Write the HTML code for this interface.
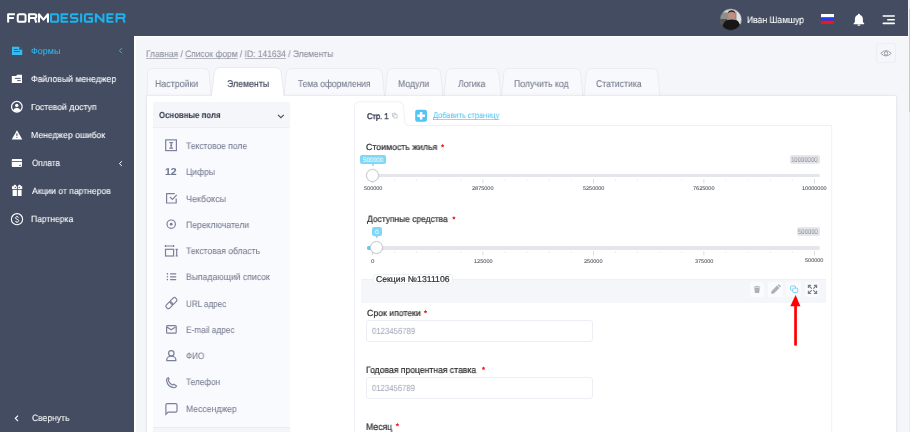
<!DOCTYPE html>
<html><head><meta charset="utf-8">
<style>
*{margin:0;padding:0;box-sizing:border-box}
html,body{width:910px;height:432px;overflow:hidden;background:#f5f6fa;font-family:"Liberation Sans",sans-serif}
.a{position:absolute}
.t{position:absolute;white-space:nowrap;line-height:1;transform-origin:0 0;will-change:transform;-webkit-text-stroke:.08px currentColor;text-rendering:geometricPrecision}
svg{position:absolute;left:0;top:0;overflow:visible}
u{text-decoration-color:#b3b7c1;text-decoration-skip-ink:none}
</style></head><body>
<div class="a" style="left:0;top:0;width:908px;height:36px;background:#434c60"></div>
<div class="a" style="left:0;top:36px;width:134px;height:396px;background:#434c60"></div>
<div class="a" style="left:134px;top:36px;width:774px;height:396px;background:#f5f6fa;border-left:2px solid #fff;border-top:1.5px solid #fff"></div>
<div class="a" style="left:908px;top:0;width:1px;height:432px;background:#f7f7f9"></div><div class="a" style="left:909px;top:0;width:1px;height:432px;background:#ebebed"></div>
<div class="a" style="left:909px;top:9px;width:1px;height:103px;background:#c9cacf"></div>

<!-- logo -->
<svg width="910" height="432"><path d="M14.9 14.25H8.15V22.6M8.15 18H13.9 M19.35 14.25H23.95Q25.55 14.25 25.55 15.85V20.15Q25.55 21.75 23.95 21.75H19.35Q17.75 21.75 17.75 20.15V15.85Q17.75 14.25 19.35 14.25Z M29.05 22.6V14.25H34.6Q36.25 14.25 36.25 15.9V16.35Q36.25 18 34.6 18H29.05M34.8 18L36.35 22.6 M38.95 22.6V14.25L43.45 19.6L47.95 14.25V22.6" fill="none" stroke="#fff" stroke-width="2.05" stroke-linejoin="round"/><path d="M51.05 14.25H56.55Q58.15 14.25 58.15 15.85V20.15Q58.15 21.75 56.55 21.75H51.05Z M68.2 14.25H61.55V21.75H68.2M61.55 18H67.4 M78.3 14.25H72.3Q70.85 14.25 70.85 15.7V16.55Q70.85 18 72.3 18H76Q77.45 18 77.45 19.45V20.3Q77.45 21.75 76 21.75H70 M81.15 13.4V22.6 M92.8 14.25H86.45Q84.85 14.25 84.85 15.85V20.15Q84.85 21.75 86.45 21.75H91.95V18H88.5 M95.85 22.6V14.25L103.45 21.75V13.4 M113.5 14.25H107.35V21.75H113.5M107.35 18H112.7 M116.55 22.6V14.25H122.9Q124.55 14.25 124.55 15.9V16.35Q124.55 18 122.9 18H116.55M123.1 18L124.65 22.6" fill="none" stroke="#1ab3ee" stroke-width="2.05" stroke-linejoin="round"/></svg>

<!-- header right icons -->
<svg width="910" height="432">
<defs><clipPath id="av"><circle cx="730.8" cy="19.6" r="10.8"/></clipPath></defs>
<filter id="avb" x="-10%" y="-10%" width="120%" height="120%"><feGaussianBlur stdDeviation=".55"/></filter>
<g clip-path="url(#av)"><g filter="url(#avb)">
<rect x="718" y="7" width="26" height="26" fill="#8e8e8c"/>
<rect x="718" y="7" width="26" height="5.5" fill="#cfcfcd"/>
<rect x="736.5" y="10" width="6" height="14" fill="#e2e2e0"/>
<rect x="718" y="19" width="9" height="14" fill="#55524f"/>
<ellipse cx="731.6" cy="15.6" rx="3.5" ry="4.2" fill="#bf8e80"/>
<path d="M727.9 13.2Q728.2 10.4 731.6 10.3Q735.1 10.4 735.3 13.2Q733.6 11.9 731.6 12Q729.6 11.9 727.9 13.2z" fill="#3a2f2a"/>
<path d="M721.5 33Q722 22.5 726.5 20.2L731.6 19.6L736.8 20.2Q740.5 22 741.5 33z" fill="#161616"/>
</g></g>
<circle cx="730.8" cy="19.6" r="10.8" fill="none" stroke="#5a5f70" stroke-width=".5"/>
<rect x="821" y="14" width="13" height="3.4" fill="#ffffff"/>
<rect x="821" y="17.4" width="13" height="3.3" fill="#1d3df0"/>
<rect x="821" y="20.7" width="13" height="3.3" fill="#ee1424"/>
<path d="M858.9 13.8c.7 0 1.1.5 1.1 1.1 1.9.5 2.9 2.1 2.9 4.1v2.9l1.3 1.7v.7h-10.6v-.7l1.3-1.7V19c0-2 1-3.6 2.9-4.1 0-.6.4-1.1 1.1-1.1z" fill="#fff"/>
<path d="M857.3 24.4h3.2c0 .9-.7 1.4-1.6 1.4s-1.6-.5-1.6-1.4z" fill="#fff"/>
<rect x="882.5" y="15.2" width="12.5" height="1.6" rx=".8" fill="#fff"/>
<rect x="887" y="19" width="8" height="1.6" rx=".8" fill="#fff"/>
<rect x="882.5" y="22.6" width="12.5" height="1.6" rx=".8" fill="#fff"/>
</svg>

<!-- sidebar icons -->
<svg width="910" height="432">
<path d="M12 46.8h7.6l2.6 2.6v5.5H12z" fill="#35bdf3"/>
<path d="M19.6 46.8v2.6h2.6" fill="#434c60" stroke="#434c60" stroke-width=".6"/>
<rect x="13.8" y="49.1" width="4" height=".9" fill="#434c60"/>
<rect x="13.8" y="51.2" width="6" height=".9" fill="#434c60"/>
<path d="M11.8 76h4.5l.6-1.2H22V83H11.8z" fill="#fff"/>
<rect x="14.9" y="77.9" width="5.8" height=".9" fill="#434c60"/>
<rect x="17.2" y="80.2" width="3.5" height=".9" fill="#434c60"/>
<circle cx="16.85" cy="106.75" r="5.3" fill="none" stroke="#fff" stroke-width="1.2"/>
<circle cx="16.8" cy="105.4" r="1.7" fill="#fff"/>
<path d="M13.2 110.3 Q14 107.8 16.85 107.8 Q19.7 107.8 20.5 110.3 Q19 111.8 16.85 111.8 Q14.7 111.8 13.2 110.3z" fill="#fff"/>
<path d="M17 130.2 L22.3 139.6 H11.7z" fill="#fff"/>
<rect x="16.35" y="133.4" width="1.1" height="2.4" fill="#434c60"/>
<rect x="16.35" y="136.8" width="1.1" height="1" fill="#434c60"/>
<rect x="11.8" y="159" width="10.2" height="7.9" rx=".8" fill="#fff"/>
<rect x="11.8" y="161.2" width="10.2" height=".8" fill="#434c60"/>
<rect x="19" y="164.9" width="2" height=".8" fill="#434c60"/>
<rect x="12" y="186.2" width="10.2" height="2.9" fill="#fff"/>
<rect x="12.6" y="189.9" width="9" height="6.1" fill="#fff"/>
<rect x="16.9" y="186" width=".9" height="10" fill="#434c60"/>
<circle cx="14.9" cy="186" r="1.3" fill="#fff"/><circle cx="19.5" cy="186" r="1.3" fill="#fff"/>
<circle cx="15.3" cy="187.4" r=".6" fill="#434c60"/><circle cx="19.25" cy="187.4" r=".6" fill="#434c60"/>
<circle cx="17" cy="219.2" r="5.6" fill="none" stroke="#fff" stroke-width="1.1"/>
<path d="M18.6 217.6c-.2-.6-.8-.9-1.6-.9-.9 0-1.6.5-1.6 1.2 0 1.6 3.4 1 3.4 2.8 0 .8-.8 1.3-1.8 1.3-.9 0-1.6-.4-1.8-1.1M17 215.9v.8M17 222v.8" fill="none" stroke="#fff" stroke-width=".9"/>
<path d="M121.9 48.2 L119.4 50.7 L121.9 53.2" fill="none" stroke="#2db8f0" stroke-width="1"/>
<path d="M121.9 161.3 L119.4 163.6 L121.9 166" fill="none" stroke="#fff" stroke-width="1"/>
<path d="M18 415.6 L15.3 418.3 L18 421" fill="none" stroke="#fff" stroke-width="1.1"/>
</svg>

<!-- eye button -->
<div class="a" style="left:876px;top:43px;width:20px;height:20px;border:1px solid #eceef2;border-radius:3px"></div>
<svg width="910" height="432">
<path d="M880.8 53.3 Q886 48 891.2 53.3 Q886 58.6 880.8 53.3z" fill="none" stroke="#9aa0ad" stroke-width="1"/>
<circle cx="886" cy="53.3" r="1.7" fill="none" stroke="#9aa0ad" stroke-width="1"/>
</svg>

<!-- tabs -->
<svg width="910" height="432"><path d="M147.00 96.50 L147.50 74.00 Q147.90 68.50 153.00 68.50 L203.80 68.50 Q208.90 68.50 209.30 74.00 L211.30 96.50 Z" fill="#f8f9fc" stroke="#e6e8ee" stroke-width="0.8"/><path d="M284.00 96.50 L286.20 74.00 Q286.60 68.50 291.70 68.50 L376.80 68.50 Q381.90 68.50 382.30 74.00 L384.50 96.50 Z" fill="#f8f9fc" stroke="#e6e8ee" stroke-width="0.8"/><path d="M385.00 96.50 L387.20 74.00 Q387.60 68.50 392.70 68.50 L435.30 68.50 Q440.40 68.50 440.80 74.00 L443.00 96.50 Z" fill="#f8f9fc" stroke="#e6e8ee" stroke-width="0.8"/><path d="M444.00 96.50 L446.20 74.00 Q446.60 68.50 451.70 68.50 L493.30 68.50 Q498.40 68.50 498.80 74.00 L501.00 96.50 Z" fill="#f8f9fc" stroke="#e6e8ee" stroke-width="0.8"/><path d="M501.50 96.50 L503.70 74.00 Q504.10 68.50 509.20 68.50 L575.30 68.50 Q580.40 68.50 580.80 74.00 L583.00 96.50 Z" fill="#f8f9fc" stroke="#e6e8ee" stroke-width="0.8"/><path d="M584.00 96.50 L586.20 74.00 Q586.60 68.50 591.70 68.50 L652.30 68.50 Q657.40 68.50 657.80 74.00 L660.00 96.50 Z" fill="#f8f9fc" stroke="#e6e8ee" stroke-width="0.8"/></svg>
<div class="a" style="left:147px;top:96px;width:749px;height:340px;background:#fff;box-shadow:0 0 1.2px rgba(60,70,100,.2),0 0 4px rgba(60,70,110,.08)"></div>
<svg width="910" height="432"><path d="M211.50 96.20 L214.20 73.50 Q214.60 67.50 220.20 67.50 L275.30 67.50 Q280.90 67.50 281.30 73.50 L284.00 96.20" fill="#ffffff" stroke="#e4e6ec" stroke-width="0.8"/><rect x="212" y="95" width="71.5" height="3" fill="#fff"/></svg>

<!-- left fields panel -->
<div class="a" style="left:153px;top:101.5px;width:137px;height:25.5px;background:#f5f6fa"></div>
<div class="a" style="left:153px;top:127px;width:137px;height:300px;background:#f9fafd;border-top:1px solid #edeff4"></div>
<div class="a" style="left:153px;top:427px;width:137px;height:6px;background:#f4f5f9;border-top:1px solid #eaecf1"></div>
<svg width="910" height="432">
<path d="M278 114.8l2.9 2.9 2.9-2.9" stroke="#4a5166" stroke-width="1.2" fill="none"/>
<g fill="none" stroke="#7a819a" stroke-width="1.2">
<rect x="165.7" y="139.9" width="10.7" height="10.7"/>
<path d="M169.3 142.7h3.8M169.3 148.1h3.8M171.2 142.7v5.4M170.2 145.4h2"/>
<path d="M176.2 198.6v4.4H166.6V193.6h8.2"/>
<path d="M169.9 196.9l2.5 2.5 4.4-4.6"/>
<circle cx="171.2" cy="224.2" r="4.2"/>
<path d="M165.4 246h8.2M165.4 244.9v2.2M173.6 244.9v2.2"/>
<rect x="165.5" y="249.3" width="8.1" height="6.7"/>
<path d="M176.7 249.3v6.7M175.5 249.3h2.4M175.5 256h2.4"/>
<path d="M170.1 273.9h6.1M170.1 276.8h6.1M170.1 279.6h6.1"/>
<rect x="166.6" y="325.6" width="9.6" height="7.6" rx="1"/>
<path d="M166.8 327.1l4.4 2.7 4.4-2.7"/>
<circle cx="171.3" cy="353.3" r="2.7"/>
<path d="M166.8 360.6v-1c0-1.9 2-3.4 4.5-3.4s4.5 1.5 4.5 3.4v1z"/>
<path d="M168.4 377.7c-1.2.4-2 1.4-1.8 2.9.6 3.6 3.5 6.5 7.1 7.1 1.5.2 2.5-.6 2.9-1.8l-2.6-1.7c-.5.6-1.1.9-1.8.6-1.6-.8-2.9-2.1-3.7-3.7-.3-.7 0-1.3.6-1.8z"/>
<path d="M165.9 414.3V405c0-.8.6-1.4 1.4-1.4h8.3c.8 0 1.4.6 1.4 1.4v5.7c0 .8-.6 1.4-1.4 1.4h-7.4z"/>
</g>
<g fill="#7a819a">
<circle cx="171.2" cy="224.2" r="1.4"/>
<circle cx="167.4" cy="273.9" r=".8"/><circle cx="167.4" cy="276.8" r=".8"/><circle cx="167.4" cy="279.6" r=".8"/>
</g>

</svg>
<svg width="910" height="432"><g fill="none" stroke="#7a819a" stroke-width="1.2">
<rect x="-3.6" y="-2.3" width="7.2" height="4.6" rx="1.8" transform="translate(173.5 301.0) rotate(-45)"/>
<rect x="-3.6" y="-2.3" width="7.2" height="4.6" rx="1.8" transform="translate(169.3 305.2) rotate(-45)"/>
</g></svg>

<!-- form area -->
<svg width="910" height="432"><path d="M354.5 440V107.5Q354.5 101.8 360.2 101.8H397.8Q403.3 101.8 403.7 107L404.6 121.6Q404.9 125.5 409 125.5H831.7V440" fill="none" stroke="#eef0f5" stroke-width="1"/></svg>
<svg width="910" height="432">
<rect x="392.5" y="113.3" width="3.4" height="3.4" rx=".6" fill="none" stroke="#b8bcc6" stroke-width=".8"/>
<rect x="393.8" y="114.6" width="3.4" height="3.4" rx=".6" fill="#fff" stroke="#b8bcc6" stroke-width=".8"/>
<rect x="415.2" y="109.8" width="11.8" height="12" rx="2" fill="#52c5f6"/>
<path d="M421.1 112v7.6M417.3 115.8h7.6" stroke="#fff" stroke-width="2.5"/>
</svg>

<!-- slider 1 -->
<div class="a" style="left:360px;top:154.5px;width:25.8px;height:9.6px;border-radius:2px;background:#80d8f8"></div>
<svg width="910" height="432"><path d="M371.6 164.2H374.4L373 166.6z" fill="#80d8f8"/></svg>
<div class="a" style="left:789.5px;top:155.2px;width:30.1px;height:8.6px;border-radius:2px;background:#e5e7ec"></div>
<div class="a" style="left:366px;top:174.1px;width:453.6px;height:3.4px;border-radius:1.7px;background:#e4e6eb"></div>
<svg width="910" height="432"><rect x="372.00" y="179.2" width="0.8" height="4" fill="#d3d6dc"/><rect x="394.10" y="179.4" width="0.8" height="1.5" fill="#e2e4e8"/><rect x="416.20" y="179.4" width="0.8" height="1.5" fill="#e2e4e8"/><rect x="438.30" y="179.4" width="0.8" height="1.5" fill="#e2e4e8"/><rect x="460.40" y="179.4" width="0.8" height="1.5" fill="#e2e4e8"/><rect x="482.50" y="179.2" width="0.8" height="4" fill="#d3d6dc"/><rect x="504.60" y="179.4" width="0.8" height="1.5" fill="#e2e4e8"/><rect x="526.70" y="179.4" width="0.8" height="1.5" fill="#e2e4e8"/><rect x="548.80" y="179.4" width="0.8" height="1.5" fill="#e2e4e8"/><rect x="570.90" y="179.4" width="0.8" height="1.5" fill="#e2e4e8"/><rect x="593.00" y="179.2" width="0.8" height="4" fill="#d3d6dc"/><rect x="615.10" y="179.4" width="0.8" height="1.5" fill="#e2e4e8"/><rect x="637.20" y="179.4" width="0.8" height="1.5" fill="#e2e4e8"/><rect x="659.30" y="179.4" width="0.8" height="1.5" fill="#e2e4e8"/><rect x="681.40" y="179.4" width="0.8" height="1.5" fill="#e2e4e8"/><rect x="703.50" y="179.2" width="0.8" height="4" fill="#d3d6dc"/><rect x="725.60" y="179.4" width="0.8" height="1.5" fill="#e2e4e8"/><rect x="747.70" y="179.4" width="0.8" height="1.5" fill="#e2e4e8"/><rect x="769.80" y="179.4" width="0.8" height="1.5" fill="#e2e4e8"/><rect x="791.90" y="179.4" width="0.8" height="1.5" fill="#e2e4e8"/><rect x="814.00" y="179.2" width="0.8" height="4" fill="#d3d6dc"/></svg>
<div class="a" style="left:365.7px;top:168.8px;width:13.2px;height:13.2px;border-radius:50%;background:#fff;border:1.2px solid #c8cbd2;box-shadow:0 0 1.5px rgba(0,0,0,.12)"></div>

<!-- slider 2 -->
<div class="a" style="left:372px;top:227px;width:10px;height:9px;border-radius:2px;background:#80d8f8"></div>
<svg width="910" height="432"><path d="M375.3 236H378.1L376.7 238.5z" fill="#80d8f8"/></svg>
<div class="a" style="left:796.8px;top:227.2px;width:22.8px;height:9px;border-radius:2px;background:#e5e7ec"></div>
<div class="a" style="left:366.8px;top:246.2px;width:452.8px;height:3.4px;border-radius:1.7px;background:#e4e6eb"></div>
<div class="a" style="left:366.8px;top:246.2px;width:8px;height:3.4px;border-radius:1.7px;background:#60cbf6"></div>
<svg width="910" height="432"><rect x="372.00" y="251.2" width="0.8" height="4" fill="#d3d6dc"/><rect x="394.10" y="251.4" width="0.8" height="1.5" fill="#e2e4e8"/><rect x="416.20" y="251.4" width="0.8" height="1.5" fill="#e2e4e8"/><rect x="438.30" y="251.4" width="0.8" height="1.5" fill="#e2e4e8"/><rect x="460.40" y="251.4" width="0.8" height="1.5" fill="#e2e4e8"/><rect x="482.50" y="251.2" width="0.8" height="4" fill="#d3d6dc"/><rect x="504.60" y="251.4" width="0.8" height="1.5" fill="#e2e4e8"/><rect x="526.70" y="251.4" width="0.8" height="1.5" fill="#e2e4e8"/><rect x="548.80" y="251.4" width="0.8" height="1.5" fill="#e2e4e8"/><rect x="570.90" y="251.4" width="0.8" height="1.5" fill="#e2e4e8"/><rect x="593.00" y="251.2" width="0.8" height="4" fill="#d3d6dc"/><rect x="615.10" y="251.4" width="0.8" height="1.5" fill="#e2e4e8"/><rect x="637.20" y="251.4" width="0.8" height="1.5" fill="#e2e4e8"/><rect x="659.30" y="251.4" width="0.8" height="1.5" fill="#e2e4e8"/><rect x="681.40" y="251.4" width="0.8" height="1.5" fill="#e2e4e8"/><rect x="703.50" y="251.2" width="0.8" height="4" fill="#d3d6dc"/><rect x="725.60" y="251.4" width="0.8" height="1.5" fill="#e2e4e8"/><rect x="747.70" y="251.4" width="0.8" height="1.5" fill="#e2e4e8"/><rect x="769.80" y="251.4" width="0.8" height="1.5" fill="#e2e4e8"/><rect x="791.90" y="251.4" width="0.8" height="1.5" fill="#e2e4e8"/><rect x="814.00" y="251.2" width="0.8" height="4" fill="#d3d6dc"/></svg>
<div class="a" style="left:370.3px;top:241.2px;width:13.2px;height:13.2px;border-radius:50%;background:#fff;border:1.2px solid #c8cbd2;box-shadow:0 0 1.5px rgba(0,0,0,.12)"></div>

<!-- section -->
<div class="a" style="left:361px;top:279px;width:465px;height:23.5px;background:#f5f6fa;border-top:1px solid #eef0f4"></div>
<div class="a" style="left:373px;top:273.5px;width:79.5px;height:10.6px;background:#fff;border:1px solid #eef0f4;border-radius:3px"></div>
<div class="a" style="left:750px;top:282px;width:14px;height:15px;background:#fafbfc;border-radius:2px"></div>
<div class="a" style="left:767.5px;top:282px;width:15px;height:15px;background:#fafbfc;border-radius:2px"></div>
<div class="a" style="left:786px;top:282px;width:14.5px;height:15px;background:#fafbfc;border-radius:2px"></div>
<div class="a" style="left:805px;top:282px;width:14px;height:15px;background:#fafbfc;border-radius:2px"></div>
<svg width="910" height="432">
<g fill="#adb0b8">
<rect x="753.8" y="286.6" width="6.5" height="1" rx=".4"/><path d="M755.6 286.8q0-1.1 1.4-1.1q1.4 0 1.4 1.1z"/>
<path d="M754.4 288.1h5.3l-.4 4.5c0 .3-.3.5-.6.5h-3.3c-.3 0-.6-.2-.6-.5z"/>
<path d="M771.2 291.4l5.8-5.8 2.4 2.4-5.8 5.8h-2.4z"/><path d="M777.6 285l.6-.6c.3-.3.7-.3 1 0l1.4 1.4c.3.3.3.7 0 1l-.6.6z"/>
</g>
<rect x="790.6" y="286" width="4.9" height="4.3" rx=".9" fill="none" stroke="#7ad3f8" stroke-width="1"/>
<rect x="792.7" y="288.2" width="5" height="4.3" rx=".9" fill="#fafbfc" stroke="#7ad3f8" stroke-width="1"/>
<path d="M808.6 285.5L811.7 288.6M816.4 285.5L813.3 288.6M808.6 293.3L811.7 290.2M816.4 293.3L813.3 290.2" stroke="#7a7f8a" stroke-width="1.2" fill="none"/>
<path d="M808.4 288V285.3H811.1M816.6 288V285.3H813.9M808.4 290.8V293.5H811.1M816.6 290.8V293.5H813.9" stroke="#7a7f8a" stroke-width="1.2" fill="none"/>
<text x="0" y="0"></text>
</svg>

<!-- inputs -->
<div class="a" style="left:366px;top:320.3px;width:227px;height:22.2px;border:1px solid #eceef4;border-radius:3px"></div>
<div class="a" style="left:366px;top:377.3px;width:227px;height:21.5px;border:1px solid #eceef4;border-radius:3px"></div>

<!-- asterisks -->
<svg width="910" height="432"><g fill="#f21c1c"><polygon points="442.60,143.80 443.19,144.99 444.50,145.18 443.55,146.11 443.78,147.42 442.60,146.80 441.42,147.42 441.65,146.11 440.70,145.18 442.01,144.99"/><polygon points="453.90,216.00 454.49,217.19 455.80,217.38 454.85,218.31 455.08,219.62 453.90,219.00 452.72,219.62 452.95,218.31 452.00,217.38 453.31,217.19"/><polygon points="425.50,309.70 426.09,310.89 427.40,311.08 426.45,312.01 426.68,313.32 425.50,312.70 424.32,313.32 424.55,312.01 423.60,311.08 424.91,310.89"/><polygon points="483.50,366.40 484.09,367.59 485.40,367.78 484.45,368.71 484.68,370.02 483.50,369.40 482.32,370.02 482.55,368.71 481.60,367.78 482.91,367.59"/><polygon points="397.40,422.80 397.99,423.99 399.30,424.18 398.35,425.11 398.58,426.42 397.40,425.80 396.22,426.42 396.45,425.11 395.50,424.18 396.81,423.99"/></g></svg>

<!-- red arrow -->
<svg width="910" height="432"><path d="M795.6 294.9L800.4 306.2H790.3z" fill="#f00"/><rect x="794.2" y="305" width="2.7" height="40.6" fill="#f00"/></svg>

<div class="t" style="left:31.45px;top:47px;font-size:8.84px;color:#2db8f0;transform:scaleX(1.013);">Формы</div>
<div class="t" style="left:31.47px;top:75px;font-size:9.13px;color:#ffffff;transform:scaleX(0.951);">Файловый менеджер</div>
<div class="t" style="left:31.21px;top:103px;font-size:8.84px;color:#ffffff;transform:scaleX(0.977);">Гостевой доступ</div>
<div class="t" style="left:31.31px;top:131px;font-size:8.84px;color:#ffffff;transform:scaleX(0.974);">Менеджер ошибок</div>
<div class="t" style="left:31.67px;top:159px;font-size:9.13px;color:#ffffff;transform:scaleX(0.891);">Оплата</div>
<div class="t" style="left:32.00px;top:187px;font-size:8.99px;color:#ffffff;transform:scaleX(0.955);">Акции от партнеров</div>
<div class="t" style="left:31.32px;top:215px;font-size:8.99px;color:#ffffff;transform:scaleX(0.950);">Партнерка</div>
<div class="t" style="left:31.67px;top:414px;font-size:9.13px;color:#ffffff;transform:scaleX(0.936);">Свернуть</div>
<div class="t" style="left:747.31px;top:16px;font-size:9.57px;color:#ffffff;transform:scaleX(0.898);">Иван Шамшур</div>
<div class="t" style="left:145.92px;top:49px;font-size:9.42px;color:#8a8f9c;transform:scaleX(0.896);"><u>Главная</u> / <u>Список форм</u> / <u>ID: 141634</u> / Элементы</div>
<div class="t" style="left:155.29px;top:80px;font-size:9.86px;color:#747a8c;transform:scaleX(0.896);">Настройки</div>
<div class="t" style="left:297.83px;top:80px;font-size:9.86px;color:#747a8c;transform:scaleX(0.857);">Тема оформления</div>
<div class="t" style="left:398.30px;top:80px;font-size:9.86px;color:#747a8c;transform:scaleX(0.886);">Модули</div>
<div class="t" style="left:458.00px;top:80px;font-size:9.86px;color:#747a8c;transform:scaleX(0.887);">Логика</div>
<div class="t" style="left:514.00px;top:80px;font-size:9.86px;color:#747a8c;transform:scaleX(0.888);">Получить код</div>
<div class="t" style="left:596.06px;top:80px;font-size:9.86px;color:#747a8c;transform:scaleX(0.883);">Статистика</div>
<div class="t" style="left:226.56px;top:80px;font-size:9.86px;color:#3a4155;transform:scaleX(0.889);-webkit-text-stroke:.15px #3a4155;">Элементы</div>
<div class="t" style="left:158.69px;top:111px;font-size:8.86px;color:#3a4155;font-weight:bold;transform:scaleX(0.884);">Основные поля</div>
<div class="t" style="left:186.33px;top:142px;font-size:9.28px;color:#787e93;transform:scaleX(0.917);">Текстовое поле</div>
<div class="t" style="left:185.82px;top:168px;font-size:9.28px;color:#787e93;transform:scaleX(0.923);">Цифры</div>
<div class="t" style="left:185.87px;top:195px;font-size:9.28px;color:#787e93;transform:scaleX(0.966);">Чекбоксы</div>
<div class="t" style="left:185.81px;top:221px;font-size:9.28px;color:#787e93;transform:scaleX(0.932);">Переключатели</div>
<div class="t" style="left:186.33px;top:247px;font-size:9.28px;color:#787e93;transform:scaleX(0.921);">Текстовая область</div>
<div class="t" style="left:185.81px;top:273px;font-size:9.28px;color:#787e93;transform:scaleX(0.932);">Выпадающий список</div>
<div class="t" style="left:185.94px;top:300px;font-size:9.28px;color:#787e93;transform:scaleX(0.868);">URL адрес</div>
<div class="t" style="left:185.84px;top:326px;font-size:9.28px;color:#787e93;transform:scaleX(0.894);">E-mail адрес</div>
<div class="t" style="left:186.09px;top:352px;font-size:9.28px;color:#787e93;transform:scaleX(0.873);">ФИО</div>
<div class="t" style="left:186.34px;top:378px;font-size:9.28px;color:#787e93;transform:scaleX(0.888);">Телефон</div>
<div class="t" style="left:185.81px;top:405px;font-size:9.28px;color:#787e93;transform:scaleX(0.932);">Мессенджер</div>
<div class="t" style="left:164.67px;top:168px;font-size:10.00px;color:#6f7791;font-weight:bold;transform:scaleX(1.053);">12</div>
<div class="t" style="left:366.62px;top:113px;font-size:8.26px;color:#3a4155;transform:scaleX(0.915);-webkit-text-stroke:.45px #3a4155;">Стр. 1</div>
<div class="t" style="left:433.00px;top:112px;font-size:8.26px;color:#55c5f4;transform:scaleX(0.897);text-decoration:underline;text-decoration-skip-ink:none;text-decoration-color:#8fd8f6;-webkit-text-stroke:.05px currentColor;">Добавить страницу</div>
<div class="t" style="left:366.36px;top:143px;font-size:8.84px;color:#2f3033;transform:scaleX(0.990);-webkit-text-stroke:.22px #2f3033;">Стоимость жилья</div>
<div class="t" style="left:366.80px;top:215px;font-size:8.99px;color:#2f3033;transform:scaleX(0.938);-webkit-text-stroke:.22px #2f3033;">Доступные средства</div>
<div class="t" style="left:375.77px;top:275px;font-size:8.55px;color:#2f3033;transform:scaleX(1.014);-webkit-text-stroke:.22px #2f3033;">Секция №1311106</div>
<div class="t" style="left:366.76px;top:309px;font-size:8.84px;color:#2f3033;transform:scaleX(0.985);-webkit-text-stroke:.22px #2f3033;">Срок ипотеки</div>
<div class="t" style="left:366.41px;top:366px;font-size:9.28px;color:#2f3033;transform:scaleX(0.928);-webkit-text-stroke:.22px #2f3033;">Годовая процентная ставка</div>
<div class="t" style="left:366.40px;top:423px;font-size:9.57px;color:#2f3033;transform:scaleX(0.908);-webkit-text-stroke:.22px #2f3033;">Месяц</div>
<div class="t" style="left:372.17px;top:327px;font-size:8.84px;color:#a7adbd;transform:scaleX(0.879);">0123456789</div>
<div class="t" style="left:372.07px;top:384px;font-size:8.84px;color:#a7adbd;transform:scaleX(0.874);">0123456789</div>
<div class="t" style="left:362.75px;top:158px;font-size:6.38px;color:#ffffff;transform:scaleX(0.961);-webkit-text-stroke:0;">500000</div>
<div class="t" style="left:791.08px;top:158px;font-size:6.96px;color:#8d9097;transform:scaleX(0.860);-webkit-text-stroke:0;">10000000</div>
<div class="t" style="left:374.90px;top:231px;font-size:5.94px;color:#ffffff;transform:scaleX(1.134);-webkit-text-stroke:0;">0</div>
<div class="t" style="left:798.26px;top:230px;font-size:6.96px;color:#8d9097;transform:scaleX(0.859);-webkit-text-stroke:0;">500000</div>
<div class="t" style="left:363.68px;top:187px;font-size:5.36px;color:#555a63;transform:scaleX(1.030);-webkit-text-stroke:.1px currentColor;">500000</div>
<div class="t" style="left:472.12px;top:187px;font-size:5.36px;color:#555a63;transform:scaleX(1.029);-webkit-text-stroke:.1px currentColor;">2875000</div>
<div class="t" style="left:582.68px;top:187px;font-size:5.36px;color:#555a63;transform:scaleX(1.026);-webkit-text-stroke:.1px currentColor;">5250000</div>
<div class="t" style="left:693.12px;top:187px;font-size:5.36px;color:#555a63;transform:scaleX(1.029);-webkit-text-stroke:.1px currentColor;">7625000</div>
<div class="t" style="left:801.71px;top:187px;font-size:5.36px;color:#555a63;transform:scaleX(1.031);-webkit-text-stroke:.1px currentColor;">10000000</div>
<div class="t" style="left:370.82px;top:260px;font-size:5.36px;color:#555a63;transform:scaleX(1.142);-webkit-text-stroke:.1px currentColor;">0</div>
<div class="t" style="left:473.51px;top:260px;font-size:5.36px;color:#555a63;transform:scaleX(1.039);-webkit-text-stroke:.1px currentColor;">125000</div>
<div class="t" style="left:584.12px;top:260px;font-size:5.36px;color:#555a63;transform:scaleX(1.033);-webkit-text-stroke:.1px currentColor;">250000</div>
<div class="t" style="left:694.73px;top:260px;font-size:5.36px;color:#555a63;transform:scaleX(1.027);-webkit-text-stroke:.1px currentColor;">375000</div>
<div class="t" style="left:804.78px;top:259px;font-size:5.36px;color:#555a63;transform:scaleX(1.030);-webkit-text-stroke:.1px currentColor;">500000</div>
</body></html>
